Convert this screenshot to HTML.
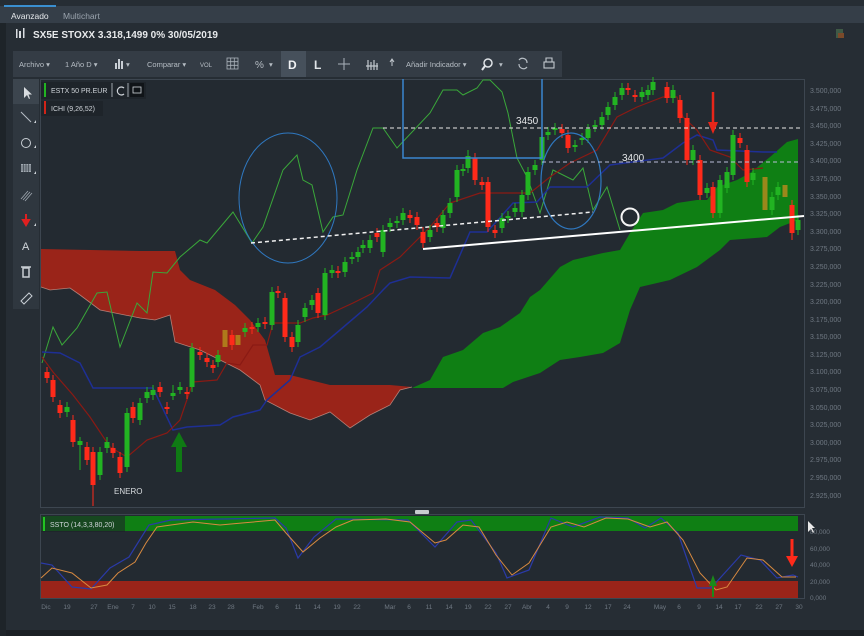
<!DOCTYPE html>
<html><head><meta charset="utf-8">
<style>
html,body{margin:0;padding:0;background:#1f252b;width:864px;height:636px;overflow:hidden;font-family:"Liberation Sans",sans-serif;}
svg{display:block}
</style></head><body>
<svg width="864" height="636" viewBox="0 0 864 636" xmlns="http://www.w3.org/2000/svg" font-family="Liberation Sans, sans-serif">
<!-- backgrounds -->
<rect x="0" y="0" width="864" height="636" fill="#1e2429"/>
<rect x="0" y="0" width="864" height="6" fill="#262d34"/>
<rect x="0" y="6" width="864" height="17" fill="#353e48"/>
<rect x="4" y="5" width="52" height="2" fill="#3a8fd0"/>
<text x="11" y="19" font-size="8.5" fill="#e6e9ec">Avanzado</text>
<text x="63" y="19" font-size="8.5" fill="#9aa3ad">Multichart</text>
<rect x="6" y="23" width="858" height="607" fill="#262d34"/>
<rect x="6" y="630" width="858" height="6" fill="#1b2025"/>
<!-- title -->
<g fill="#d8dce0"><rect x="16" y="29" width="1.5" height="9"/><rect x="19" y="31" width="2" height="7"/><rect x="23" y="28" width="1.5" height="10"/></g>
<text x="33" y="38" font-size="10" font-weight="bold" fill="#e8eaec">SX5E STOXX 3.318,1499 0% 30/05/2019</text>
<rect x="836" y="29" width="7" height="9" fill="#3f5a46"/><rect x="838" y="33" width="6" height="5" fill="#7a4a2a"/>
<!-- toolbar -->
<rect x="13" y="51" width="549" height="26" fill="#343c45"/>
<rect x="281" y="51" width="25" height="26" fill="#46505b"/>
<g font-size="7.5" fill="#b6bdc4">
<text x="19" y="67">Archivo ▾</text>
<text x="65" y="67">1 Año D ▾</text>
<text x="126" y="67">▾</text>
<text x="147" y="67">Comparar ▾</text>
<text x="200" y="67" font-size="6">VOL</text>
<text x="255" y="68" font-size="10">%</text><text x="269" y="67">▾</text>
<text x="406" y="67">Añadir Indicador ▾</text>
<text x="499" y="67">▾</text>
</g>
<g fill="#c8ced4"><rect x="115" y="63" width="2" height="6"/><rect x="118" y="59" width="2" height="10"/><rect x="121" y="61" width="2" height="8"/></g>
<g stroke="#aab2ba" stroke-width="0.8" fill="none"><rect x="227" y="58" width="11" height="11"/><path d="M230.7 58V69M234.3 58V69M227 61.7H238M227 65.3H238"/></g>
<text x="288" y="69" font-size="12" font-weight="bold" fill="#f0f2f4">D</text>
<text x="314" y="69" font-size="12" font-weight="bold" fill="#e0e4e8">L</text>
<path d="M338 64H350M344 58V70" stroke="#aab2ba" stroke-width="1"/>
<g stroke="#c2c8ce" stroke-width="1.2"><path d="M366 66H378M368 60V70M371 62V70M374 60V70M377 63V70"/></g>
<path d="M392 60V66M390 62L392 59L394 62" stroke="#c2c8ce" stroke-width="1" fill="none"/>
<circle cx="488" cy="63" r="4" stroke="#e0e4e8" stroke-width="1.5" fill="none"/><path d="M485 66L482 70" stroke="#e0e4e8" stroke-width="2"/>
<path d="M519 60A4.5 4.5 0 0 1 527 63M527 67A4.5 4.5 0 0 1 519 64" stroke="#b6bdc4" stroke-width="1.2" fill="none"/>
<g stroke="#c2c8ce" stroke-width="1.1" fill="none"><rect x="544" y="62" width="10" height="6"/><path d="M546 62V58H552V62"/></g>
<!-- left toolbar -->
<rect x="13" y="79" width="26" height="230" fill="#2f373f"/>
<rect x="13" y="79" width="26" height="25" fill="#3c454e"/>
<path d="M24 87V98L27 95L29 99L30 98.5L28.5 94.5L32 94.5Z" fill="#d8dce0"/>
<path d="M21 112L31 122" stroke="#b8bfc6" stroke-width="1"/>
<circle cx="26" cy="143" r="4.5" stroke="#c8ced4" stroke-width="1" fill="none"/>
<g fill="#a0a8b0"><rect x="21" y="164" width="10" height="8"/></g>
<g stroke="#2f373f" stroke-width="0.6"><path d="M21 166H31M21 168H31M21 170H31M23.5 164V172M26 164V172M28.5 164V172"/></g>
<path d="M21 199L28 191M23 200L30 192M25 201L32 193" stroke="#a0a8b0" stroke-width="0.8"/>
<path d="M26 214V221M23 220L26 225L29 220Z" stroke="#e02020" stroke-width="2" fill="#e02020"/>
<text x="22" y="250" font-size="11" fill="#d0d5da">A</text>
<path d="M21 267H31M23 268H29V277H23Z" stroke="#c8ced4" stroke-width="1.5" fill="none"/>
<path d="M21 301L29 293L32 296L24 304Z" stroke="#c8ced4" stroke-width="1" fill="none"/>
<g fill="#d0d5da"><path d="M34 123l2-3v3z M34 148l2-3v3z M34 174l2-3v3z M34 226l2-3v3z"/></g>
<!-- main chart -->
<rect x="40.5" y="79.5" width="764" height="428" fill="#232a31" stroke="#3d4650" stroke-width="1"/>
<!-- axis labels -->
<g font-size="7" fill="#6f7882">
<text x="810" y="93">3.500,000</text><text x="810" y="111">3.475,000</text><text x="810" y="128">3.450,000</text><text x="810" y="146">3.425,000</text><text x="810" y="163">3.400,000</text><text x="810" y="181">3.375,000</text><text x="810" y="199">3.350,000</text><text x="810" y="216">3.325,000</text><text x="810" y="234">3.300,000</text><text x="810" y="251">3.275,000</text><text x="810" y="269">3.250,000</text><text x="810" y="287">3.225,000</text><text x="810" y="304">3.200,000</text><text x="810" y="322">3.175,000</text><text x="810" y="339">3.150,000</text><text x="810" y="357">3.125,000</text><text x="810" y="374">3.100,000</text><text x="810" y="392">3.075,000</text><text x="810" y="410">3.050,000</text><text x="810" y="427">3.025,000</text><text x="810" y="445">3.000,000</text><text x="810" y="462">2.975,000</text><text x="810" y="480">2.950,000</text><text x="810" y="498">2.925,000</text>
</g>
<!-- red cloud -->
<path d="M41 249L140 251L175 251L180 270L190 280L215 290L235 305L250 320L265 340L275 375L290 375L310 380L330 385L390 385L412 387L400 390L390 405L370 415L350 428L330 412L310 420L290 413L265 400L260 385L240 370L200 350L175 342L170 315L155 320L140 318L100 310L80 295L70 288L50 290L41 287Z" fill="#9a2419"/>
<path d="M41 287L50 290L70 288L80 295L100 310L140 318L155 320L170 315L175 342L200 350L240 370L260 385L265 400L290 413L310 420L330 412L350 428L370 415L390 405L400 390L412 387" stroke="#d9a59a" stroke-width="0.8" fill="none" opacity="0.7"/>
<!-- green cloud -->
<path d="M412 388L430 380L443 357L463 350L483 333L500 327L520 313L530 297L540 290L560 267L573 260L603 253L620 250L630 233L643 213L663 210L677 203L697 200L707 200L717 187L737 180L750 173L770 157L787 142L798 139L798 220L780 227L767 237L730 240L720 250L697 267L670 280L640 287L630 310L620 343L603 353L580 357L560 360L540 373L513 382L503 388Z" fill="#0f7f14"/>
<!-- chikou -->
<path d="M42 363L53 327L62 345L77 328L97 293L107 292L120 347L137 303L147 313L153 272L167 273L180 257L200 240L207 243L233 212L252 243L263 227L283 170L297 155L303 180L312 185L323 232L333 217L343 215L357 170L373 128L383 128L397 148L430 113L443 90L457 90L463 95L477 88L483 80L490 80L502 92L508 113L517 158L527 177L540 213L553 170L573 180L583 168L593 210L607 187L620 230" stroke="#3aa83a" stroke-width="1" fill="none"/>
<!-- kijun -->
<path d="M42 352L60 353L80 363L93 388L153 388L173 430L187 427L220 425L233 417L260 410L267 400L290 380L300 357L320 347L340 330L367 307L383 290L390 283L410 277L450 278L470 232L487 232L513 203L537 202L550 187L587 187L610 165L663 158L683 143L697 135L713 140L717 150L763 152L777 152" stroke="#1e2f95" stroke-width="1.5" fill="none"/>
<!-- tenkan -->
<path d="M42 357L53 372L73 395L90 417L110 447L127 457L147 440L167 433L180 420L193 382L217 380L227 363L240 365L253 345L267 345L273 323L300 323L313 318L327 315L353 303L373 293L380 270L400 257L430 227L450 203L480 193L530 193L550 177L570 163L597 150L617 117L637 107L663 97L677 97L683 117L697 130L710 150L730 157L743 170L763 168" stroke="#8a1a14" stroke-width="1.2" fill="none"/>
<!-- candles wicks -->
<path stroke="#22b422" stroke-width="1" fill="none" d="M67 402V417M80 437V470M100 447V480M107 437V453M127 408V472M140 398V425M147 387V403M153 385V400M173 385V400M180 382V394M192 343V392M218 350V367M245 323V337M258 318V332M272 287V330M298 320V347M305 303V322M312 295V310M325 268V320M332 265V278M345 257V277M352 252V264M358 247V262M363 240V253M370 235V253M383 225V257M390 218V232M397 216V228M403 208V225M430 225V242M443 210V233M450 198V218M457 165V202M463 164V176M468 150V173M502 213V233M508 211V223M515 203V217M522 190V217M528 167V200M535 160V175M542 132V165M548 127V140M555 123V135M575 140V152M582 133V145M588 124V143M595 120V132M602 112V130M608 102V120M615 92V110M622 83V100M642 87V102M648 85V100M653 77V95M673 85V103M693 145V165M707 183V198M720 175V218M727 167V193M733 130V180M753 168V185M772 192V215M778 182V200M798 215V235"/>
<path stroke="#22b422" stroke-width="5" fill="none" d="M67 407V412M80 441V445M100 452V475M107 442V448M127 413V467M140 403V420M147 392V398M153 390V395M173 393V396M180 387V390M192 348V387M218 355V362M245 328V332M258 323V327M272 292V325M298 325V342M305 308V317M312 300V305M325 273V315M332 270V273M345 262V272M352 257V259M358 252V257M363 245V248M370 240V248M383 230V252M390 223V227M397 221V223M403 213V220M430 230V237M443 215V228M450 203V213M457 170V197M463 169V171M468 156V168M502 218V228M508 216V218M515 208V212M522 195V212M528 172V195M535 165V170M542 137V160M548 132V135M555 128V130M575 145V147M582 138V140M588 129V138M595 125V127M602 117V125M608 107V115M615 97V105M622 88V95M642 92V97M648 90V95M653 82V90M673 90V98M693 150V160M707 188V193M720 180V213M727 172V188M733 135V175M753 173V180M772 197V210M778 187V195M798 220V230"/>
<path stroke="#ff2a1a" stroke-width="1" fill="none" d="M47 367V383M53 375V402M60 400V418M73 415V447M87 442V465M93 447V506M113 443V458M120 452V478M133 402V423M160 382V397M167 402V414M187 387V399M200 347V360M207 353V367M213 360V373M232 330V350M252 322V334M265 317V329M278 286V298M285 293V342M292 332V352M318 288V318M338 266V278M377 228V242M410 210V223M417 212V230M423 227V248M437 218V232M475 153V185M482 177V190M488 177V232M495 225V238M562 124V138M568 130V153M628 83V95M635 90V102M667 82V103M680 95V123M687 113V165M700 155V200M713 182V218M740 133V148M747 145V187M792 200V240"/>
<path stroke="#ff2a1a" stroke-width="5" fill="none" d="M47 372V378M53 380V397M60 405V413M73 420V442M87 447V460M93 452V485M113 448V453M120 457V473M133 407V418M160 387V392M167 407V409M187 392V394M200 352V355M207 358V362M213 365V368M232 335V345M252 327V329M265 322V324M278 291V293M285 298V337M292 337V347M318 293V313M338 271V273M377 233V237M410 215V218M417 217V225M423 232V243M437 223V227M475 158V180M482 182V185M488 182V227M495 230V233M562 129V133M568 135V148M628 88V90M635 95V97M667 87V98M680 100V118M687 118V160M700 160V195M713 187V213M740 138V143M747 150V182M792 205V233"/>
<path stroke="#b38a1c" stroke-width="5" fill="none" opacity="0.85" d="M225 330V347M238 335V345M765 177V210M785 185V197"/>
<!-- annotations -->
<path d="M403 79V158H542V79" stroke="#3a86cf" stroke-width="1.5" fill="none"/>
<ellipse cx="288" cy="198" rx="49" ry="65" stroke="#2f78c0" stroke-width="1" fill="none"/>
<ellipse cx="571" cy="181" rx="30" ry="48" stroke="#2f78c0" stroke-width="1.2" fill="none"/>
<path d="M383 128H800" stroke="#e8e8e8" stroke-width="1" stroke-dasharray="4 3"/>
<path d="M542 162H800" stroke="#b8bcd8" stroke-width="1" stroke-dasharray="4 3"/>
<path d="M251 243L593 212" stroke="#f0f0f0" stroke-width="1.5" stroke-dasharray="4 3"/>
<path d="M423 249L804 216" stroke="#ffffff" stroke-width="2"/>
<circle cx="630" cy="217" r="8.5" stroke="#f4f4f4" stroke-width="2" fill="none"/>
<text x="516" y="124" font-size="10" fill="#e4e6e8">3450</text>
<text x="622" y="161" font-size="10" fill="#e4e6e8">3400</text>
<text x="114" y="494" font-size="8" fill="#d8dcdf">ENERO</text>
<path d="M176 472V447H171L179 432L187 447H182V472Z" fill="#0f7a14"/>
<path d="M713 92V125" stroke="#e8261a" stroke-width="2.5"/><path d="M708 122L713 134L718 122Z" fill="#e8261a"/>
<!-- legend -->
<rect x="41" y="82" width="105" height="17" fill="#1c2228" opacity="0.7"/>
<rect x="44" y="83" width="2" height="14" fill="#22b422"/>
<text x="51" y="93" font-size="7" fill="#d0d5da">ESTX 50 PR.EUR</text>
<path d="M112 83V97M128 83V97" stroke="#c0c6cc" stroke-width="0.8"/>
<path d="M124 88A4 4 0 1 0 124 94" stroke="#d0d5da" stroke-width="1.2" fill="none"/>
<rect x="130" y="83" width="14" height="14" fill="#101418"/><rect x="133" y="87" width="8" height="6" stroke="#d0d5da" stroke-width="0.8" fill="none"/>
<rect x="41" y="101" width="62" height="15" fill="#1c2228" opacity="0.7"/>
<rect x="44" y="101" width="2" height="13" fill="#d02418"/>
<text x="51" y="111" font-size="7" fill="#d0d5da">ICHI (9,26,52)</text>
<!-- separator -->
<rect x="415" y="510" width="14" height="4" fill="#c8ccd0" rx="1"/>
<!-- stoch panel -->
<rect x="40.5" y="514.5" width="764" height="84" fill="#232a31" stroke="#3d4650"/>
<rect x="41" y="516" width="757" height="15" fill="#0f7f14"/>
<rect x="41" y="581" width="757" height="17" fill="#9a2419"/>
<rect x="41" y="516" width="84" height="16" fill="#1c2228" opacity="0.6"/>
<rect x="43" y="517" width="2" height="14" fill="#22c422"/>
<text x="50" y="527" font-size="7" fill="#d0d5da">SSTO (14,3,3,80,20)</text>
<path d="M41 563L52 565L72 587L91 589L110 568L129 557L149 525L171 520L275 518L286 528L298 558L314 537L336 519L408 520L435 547L457 522L471 520L496 553L507 578L529 570L551 518L573 527L600 517L628 518L645 528L661 518L678 533L697 588L711 588L741 555L760 560L777 578L793 575L798 577" stroke="#2a3aa8" stroke-width="1.2" fill="none"/>
<path d="M41 578L52 568L72 573L91 588L107 585L118 573L135 562L146 543L157 527L171 525L193 522L220 525L242 523L275 520L286 533L303 552L320 538L336 527L353 520L386 519L410 522L435 543L446 540L463 525L479 527L496 555L512 575L529 563L551 527L567 522L584 527L606 518L628 519L650 527L667 522L683 540L700 573L716 590L727 587L747 558L763 560L782 577L796 577" stroke="#d88a40" stroke-width="1" fill="none"/>
<path d="M713 597V584" stroke="#1a8a1a" stroke-width="2"/><path d="M709 586L713 575L717 586Z" fill="#1a8a1a"/>
<path d="M792 539V558" stroke="#ff2a1a" stroke-width="3"/><path d="M786 556L792 567L798 556Z" fill="#ff2a1a"/>
<g font-size="6.5" fill="#6f7882">
<text x="810" y="534">80,000</text><text x="810" y="551">60,000</text><text x="810" y="567">40,000</text><text x="810" y="584">20,000</text><text x="810" y="600">0,000</text>
</g>
<path d="M808 521V532L811 529L813 533L814 532L812 528L815 528Z" fill="#e8e8e8"/>
<!-- dates -->
<g font-size="6.5" fill="#6f7882" text-anchor="middle">
<text x="46" y="609">Dic</text><text x="67" y="609">19</text><text x="94" y="609">27</text><text x="113" y="609">Ene</text><text x="133" y="609">7</text><text x="152" y="609">10</text><text x="172" y="609">15</text><text x="193" y="609">18</text><text x="212" y="609">23</text><text x="231" y="609">28</text><text x="258" y="609">Feb</text><text x="277" y="609">6</text><text x="298" y="609">11</text><text x="317" y="609">14</text><text x="337" y="609">19</text><text x="357" y="609">22</text><text x="390" y="609">Mar</text><text x="409" y="609">6</text><text x="429" y="609">11</text><text x="449" y="609">14</text><text x="468" y="609">19</text><text x="488" y="609">22</text><text x="508" y="609">27</text><text x="527" y="609">Abr</text><text x="548" y="609">4</text><text x="567" y="609">9</text><text x="588" y="609">12</text><text x="608" y="609">17</text><text x="627" y="609">24</text><text x="660" y="609">May</text><text x="679" y="609">6</text><text x="699" y="609">9</text><text x="719" y="609">14</text><text x="738" y="609">17</text><text x="759" y="609">22</text><text x="779" y="609">27</text><text x="799" y="609">30</text>
</g>
</svg>
</body></html>
